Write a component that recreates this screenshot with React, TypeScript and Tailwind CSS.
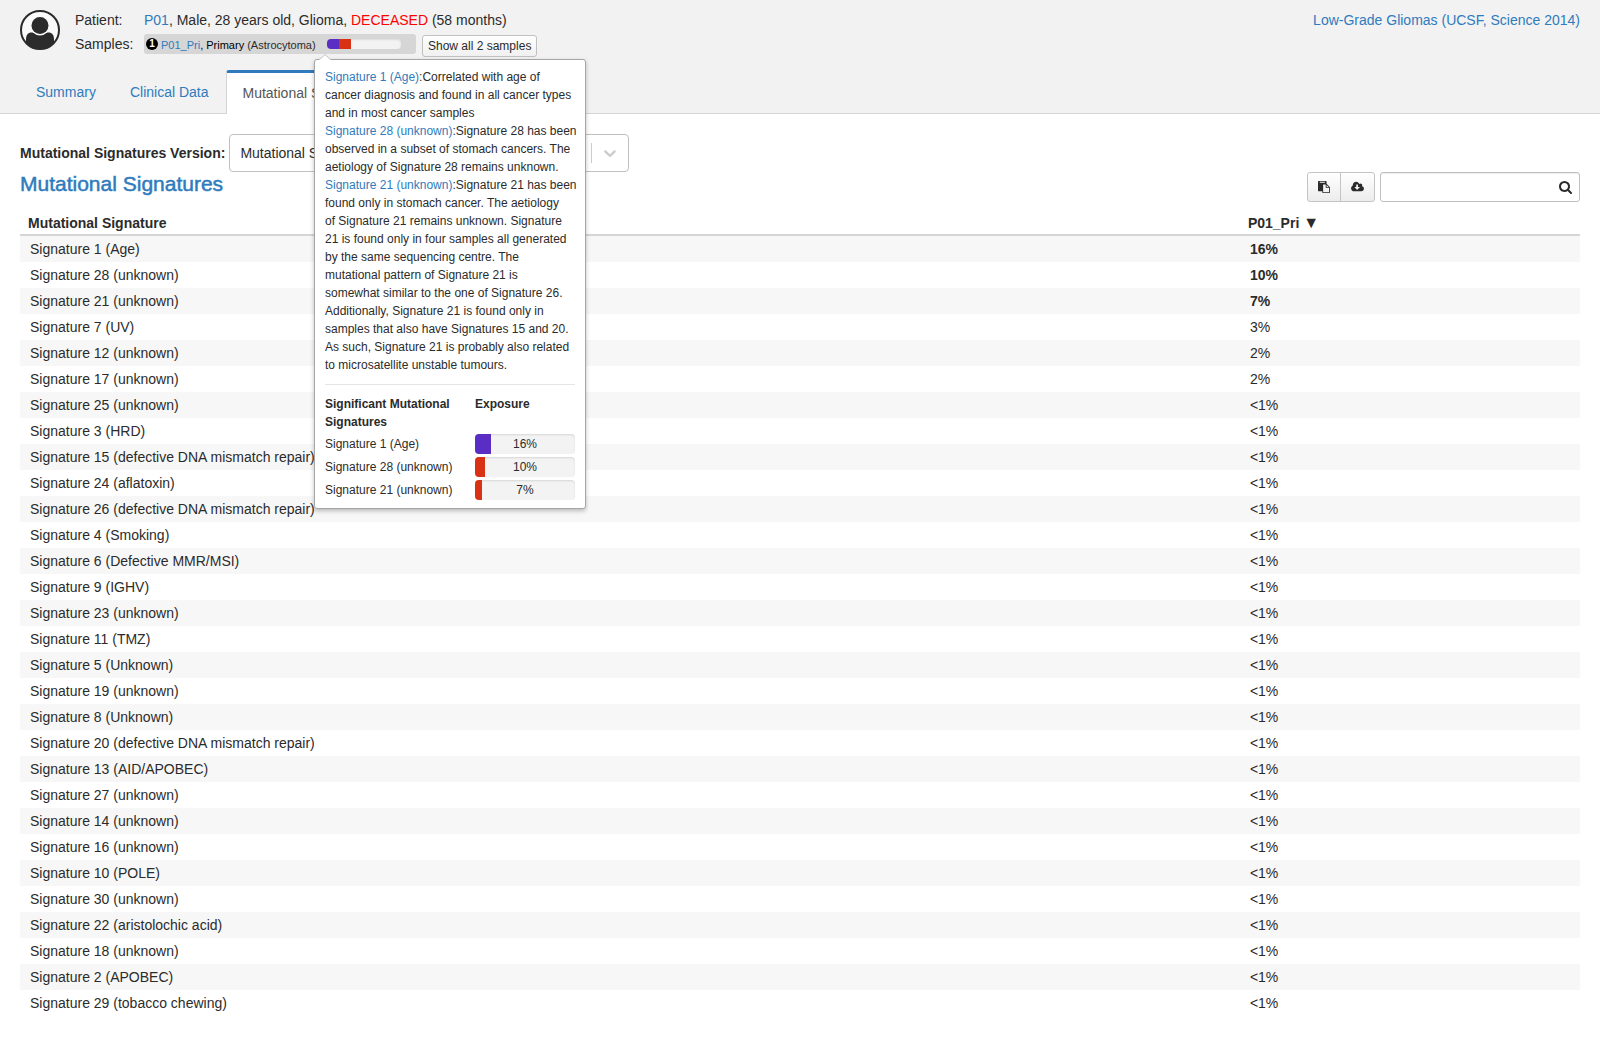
import React from 'react';

const signatures: [string, string][] = [
  ['Signature 1 (Age)', '16%'],
  ['Signature 28 (unknown)', '10%'],
  ['Signature 21 (unknown)', '7%'],
  ['Signature 7 (UV)', '3%'],
  ['Signature 12 (unknown)', '2%'],
  ['Signature 17 (unknown)', '2%'],
  ['Signature 25 (unknown)', '<1%'],
  ['Signature 3 (HRD)', '<1%'],
  ['Signature 15 (defective DNA mismatch repair)', '<1%'],
  ['Signature 24 (aflatoxin)', '<1%'],
  ['Signature 26 (defective DNA mismatch repair)', '<1%'],
  ['Signature 4 (Smoking)', '<1%'],
  ['Signature 6 (Defective MMR/MSI)', '<1%'],
  ['Signature 9 (IGHV)', '<1%'],
  ['Signature 23 (unknown)', '<1%'],
  ['Signature 11 (TMZ)', '<1%'],
  ['Signature 5 (Unknown)', '<1%'],
  ['Signature 19 (unknown)', '<1%'],
  ['Signature 8 (Unknown)', '<1%'],
  ['Signature 20 (defective DNA mismatch repair)', '<1%'],
  ['Signature 13 (AID/APOBEC)', '<1%'],
  ['Signature 27 (unknown)', '<1%'],
  ['Signature 14 (unknown)', '<1%'],
  ['Signature 16 (unknown)', '<1%'],
  ['Signature 10 (POLE)', '<1%'],
  ['Signature 30 (unknown)', '<1%'],
  ['Signature 22 (aristolochic acid)', '<1%'],
  ['Signature 18 (unknown)', '<1%'],
  ['Signature 2 (APOBEC)', '<1%'],
  ['Signature 29 (tobacco chewing)', '<1%'],
];

const descriptions = [
  {
    name: 'Signature 1 (Age)',
    text: `Correlated with age of
cancer diagnosis and found in all cancer types
and in most cancer samples`,
  },
  {
    name: 'Signature 28 (unknown)',
    text: `Signature 28 has been
observed in a subset of stomach cancers. The
aetiology of Signature 28 remains unknown.`,
  },
  {
    name: 'Signature 21 (unknown)',
    text: `Signature 21 has been
found only in stomach cancer. The aetiology
of Signature 21 remains unknown. Signature
21 is found only in four samples all generated
by the same sequencing centre. The
mutational pattern of Signature 21 is
somewhat similar to the one of Signature 26.
Additionally, Signature 21 is found only in
samples that also have Signatures 15 and 20.
As such, Signature 21 is probably also related
to microsatellite unstable tumours.`,
  },
];

const exposures = [
  { name: 'Signature 1 (Age)', value: 16, color: 'bg-[#5a2ec4]' },
  { name: 'Signature 28 (unknown)', value: 10, color: 'bg-[#d93113]' },
  { name: 'Signature 21 (unknown)', value: 7, color: 'bg-[#d93113]' },
];

function Avatar() {
  return (
    <svg viewBox="0 0 40 40" className="size-10 shrink-0" aria-hidden="true">
      <clipPath id="avatar-disc">
        <circle cx="20" cy="20" r="19" />
      </clipPath>
      <g clipPath="url(#avatar-disc)" fill="#2b2b2b">
        <circle cx="20" cy="20" r="19" fill="#fafafa" />
        <path d="M6 40V29.500c0-4.500 2-7 5.500-7h17c3.500 0 5.500 2.500 5.500 7V40z" />
        <circle cx="20" cy="15.500" r="10" fill="#fafafa" />
        <circle cx="20" cy="15.500" r="8.500" />
      </g>
      <circle cx="20" cy="20" r="19" fill="none" stroke="#2b2b2b" strokeWidth="2" />
    </svg>
  );
}

function PasteIcon() {
  return (
    <svg viewBox="0 0 1792 1792" className="size-3" fill="currentColor" aria-hidden="true">
      <path d="M768 1664h896v-640h-416q-40 0-68-28t-28-68v-416h-384v1152zm256-1440v-64q0-13-9.500-22.500t-22.500-9.500h-704q-13 0-22.500 9.500t-9.500 22.500v64q0 13 9.500 22.500t22.500 9.500h704q13 0 22.500-9.500t9.500-22.500zm256 672h299l-299-299v299zm512 128v672q0 40-28 68t-68 28h-960q-40 0-68-28t-28-68v-160h-544q-40 0-68-28t-28-68v-1344q0-40 28-68t68-28h1088q40 0 68 28t28 68v328q21 13 36 28l408 408q28 28 48 76t20 88z" />
    </svg>
  );
}

function CloudDownloadIcon() {
  return (
    <svg viewBox="0 0 1920 1792" className="h-3 w-[13px]" fill="currentColor" aria-hidden="true">
      <path d="M1280 928q0-14-9-23t-23-9h-224v-352q0-13-9.500-22.500t-22.500-9.500h-192q-13 0-22.500 9.500t-9.500 22.500v352h-224q-13 0-22.500 9.500t-9.500 22.500q0 14 9 23l352 352q9 9 23 9t23-9l351-351q10-12 10-24zm640 224q0 159-112.500 271.500t-271.500 112.500h-1088q-185 0-316.500-131.500t-131.500-316.500q0-130 70-240t188-165q-2-30-2-43 0-212 150-362t362-150q156 0 285.500 87t188.500 231q71-62 166-62 106 0 181 75t75 181q0 76-41 138 130 31 213.500 135.500t83.500 238.500z" />
    </svg>
  );
}

function SearchIcon() {
  return (
    <svg viewBox="64 128 1664 1664" className="size-[13px]" fill="currentColor" aria-hidden="true">
      <path d="M1216 832q0-185-131.500-316.500t-316.500-131.500-316.500 131.500-131.500 316.500 131.500 316.500 316.500 131.500 316.500-131.500 131.500-316.500zm512 832q0 52-38 90t-90 38q-54 0-90-38l-343-342q-179 124-399 124-143 0-273.500-55.500t-225-150-150-225-55.500-273.500 55.500-273.500 150-225 225-150 273.500-55.500 273.500 55.500 225 150 150 225 55.500 273.500q0 220-124 399l343 343q37 37 37 90z" />
    </svg>
  );
}

function SignatureTooltip() {
  return (
    <div
      role="tooltip"
      className="absolute top-[25px] left-[170px] z-10 w-[272px] rounded-[3px] border border-[#a6a6a6] bg-white px-2.5 pt-2 pb-[7px] text-xs leading-[18px] shadow-[0_2px_4px_rgba(0,0,0,0.25)]"
    >
      <svg viewBox="0 0 12 6" className="absolute -top-1.5 left-1 h-1.5 w-3" aria-hidden="true">
        <path d="M0 6 6 0.500 12 6z" fill="#fff" />
        <path d="M0 6 6 0.500 12 6" fill="none" stroke="#c0c0c0" />
      </svg>
      {descriptions.map((d) => (
        <p key={d.name} className="-mr-2 whitespace-pre-line">
          <a href="#" className="text-[#2f7bbd]">{d.name}</a>:{d.text}
        </p>
      ))}
      <hr className="my-2.5 border-[#e5e5e5]" />
      <table className="w-full table-fixed border-collapse">
        <thead>
          <tr className="text-left align-top">
            <th className="w-[150px] pr-4 pb-px">Significant Mutational Signatures</th>
            <th>Exposure</th>
          </tr>
        </thead>
        <tbody>
          {exposures.map((e) => (
            <tr key={e.name}>
              <td className="pt-0.5 pb-px align-middle">{e.name}</td>
              <td className="pt-0.5 pb-px align-middle">
                <div className="relative h-5 overflow-hidden rounded-[4px] bg-[#f3f3f3] text-center leading-5 shadow-[inset_0_1px_2px_rgba(0,0,0,0.12)]">
                  <div className={'absolute inset-y-0 left-0 ' + e.color} style={{ width: e.value + '%' }} />
                  <span className="relative">{e.value}%</span>
                </div>
              </td>
            </tr>
          ))}
        </tbody>
      </table>
    </div>
  );
}

export default function App() {
  return (
    <div className="min-h-screen bg-white font-['Liberation_Sans',Arial,sans-serif] text-sm leading-5 text-[#2b2b2b]">
      <header className="border-b border-[#d5d5d5] bg-[#f2f2f2]">
        <div className="flex items-start px-5 pt-2.5">
          <Avatar />
          <dl className="ml-[15px] grid grid-cols-[69px_auto] gap-y-1">
            <dt>Patient:</dt>
            <dd>
              <a href="#" className="text-[#2f7bbd]">P01</a>, Male, 28 years old, Glioma,{' '}
              <span className="text-[#ff0000]">DECEASED</span> (58 months)
            </dd>
            <dt>Samples:</dt>
            <dd className="relative flex items-start gap-1.5">
              <div className="flex h-5 w-[272px] items-center rounded-[3px] bg-[#d6d6d6] pl-0.5 text-[11px]">
                <span className="flex size-3 items-center justify-center rounded-full bg-black text-[10px] font-bold text-white">1</span>
                <span className="ml-[3px] whitespace-nowrap pt-px">
                  <a href="#" className="text-[#2f7bbd]">P01_Pri</a>
                  <span className="text-black">, Primary</span> (Astrocytoma)
                </span>
                <div className="ml-[11px] flex h-2.5 w-[74px] overflow-hidden rounded-[4px] bg-[#f3f3f3] shadow-[inset_0_1px_2px_rgba(0,0,0,0.1)]">
                  <div className="w-3 bg-[#5a2ec4]" />
                  <div className="w-3 bg-[#d93113]" />
                </div>
              </div>
              <button
                type="button"
                className="mt-px h-[22px] rounded-[3px] border border-[#c0c0c0] bg-linear-to-b from-white to-[#f0f0f0] px-[5px] text-xs leading-5"
              >
                Show all 2 samples
              </button>
              <SignatureTooltip />
            </dd>
          </dl>
          <a href="#" className="ml-auto text-[#2f7bbd]">Low-Grade Gliomas (UCSF, Science 2014)</a>
        </div>
        <nav className="-mb-px mt-[13px] flex items-end pl-5">
          <a href="#" className="px-4 pt-2.5 pb-3 text-[#2f7bbd]">Summary</a>
          <a href="#" className="ml-0.5 px-4 pt-2.5 pb-3 text-[#2f7bbd]">Clinical Data</a>
          <a
            href="#"
            aria-current="page"
            className="ml-px rounded-t-[3px] border-x border-t-3 border-x-[#d5d5d5] border-t-[#2f7bbd] bg-white pt-2.5 pr-[15px] pb-[11px] pl-4 text-[#555]"
          >
            Mutational Signatures
          </a>
        </nav>
      </header>

      <main className="px-5 pt-5">
        <div className="flex items-center">
          <span id="version-label" className="font-bold">Mutational Signatures Version:</span>
          <button
            type="button"
            aria-haspopup="listbox"
            aria-labelledby="version-label"
            className="ml-1 flex h-[38px] w-[400px] items-center rounded-[4px] border border-[#c0c0c0] bg-white pl-2.5 text-left"
          >
            <span className="grow">Mutational Signature v2</span>
            <span className="h-5 w-px bg-[#ccc]" />
            <svg viewBox="0 0 20 20" className="mx-2 size-5" fill="#ccc" aria-hidden="true">
              <path d="M4.516 7.548c0.436-0.446 1.043-0.481 1.576 0l3.908 3.747 3.908-3.747c0.533-0.481 1.141-0.446 1.574 0 0.436 0.445 0.408 1.197 0 1.615-0.406 0.418-4.695 4.502-4.695 4.502-0.217 0.223-0.502 0.335-0.787 0.335s-0.570-0.112-0.789-0.335c0 0-4.287-4.084-4.695-4.502s-0.436-1.170 0-1.615z" />
            </svg>
          </button>
        </div>

        <div className="flex h-[30px] items-start">
          <h1 className="text-[21px] leading-6 font-medium text-[#2f7bbd] [-webkit-text-stroke:0.5px]">Mutational Signatures</h1>
          <div className="ml-auto flex h-[30px] rounded-[3px] border border-[#c4c4c4] bg-linear-to-b from-white to-[#ececec]">
            <button type="button" aria-label="Copy" className="flex w-[33px] items-center justify-center border-r border-[#c4c4c4]">
              <PasteIcon />
            </button>
            <button type="button" aria-label="Download" className="flex w-[33px] items-center justify-center">
              <CloudDownloadIcon />
            </button>
          </div>
          <label className="relative ml-[5px] flex items-center">
            <input
              type="text"
              aria-label="Search"
              className="h-[30px] w-[200px] rounded-[3px] border border-[#c0c0c0] bg-white pr-8 pl-2.5 shadow-[inset_0_1px_1px_rgba(0,0,0,0.075)]"
            />
            <span className="absolute right-2">
              <SearchIcon />
            </span>
          </label>
        </div>

        <table className="mt-1.5 w-full table-fixed border-separate border-spacing-0">
          <thead>
            <tr className="h-7 text-left">
              <th className="w-[78.2%] border-b-2 border-[#d5d5d5] px-2 pt-1 pb-0">Mutational Signature</th>
              <th className="border-b-2 border-[#d5d5d5] px-2 pt-1 pb-0">
                P01_Pri <span className="text-base leading-5">▼</span>
              </th>
            </tr>
          </thead>
          <tbody>
            {signatures.map(([name, value], i) => (
              <tr key={name} className="h-[26px] odd:bg-[#f7f7f7]">
                <td className="px-2.5 pb-px">{name}</td>
                <td className={i < 3 ? 'px-2.5 pb-px font-bold' : 'px-2.5 pb-px'}>{value}</td>
              </tr>
            ))}
          </tbody>
        </table>
      </main>
    </div>
  );
}
